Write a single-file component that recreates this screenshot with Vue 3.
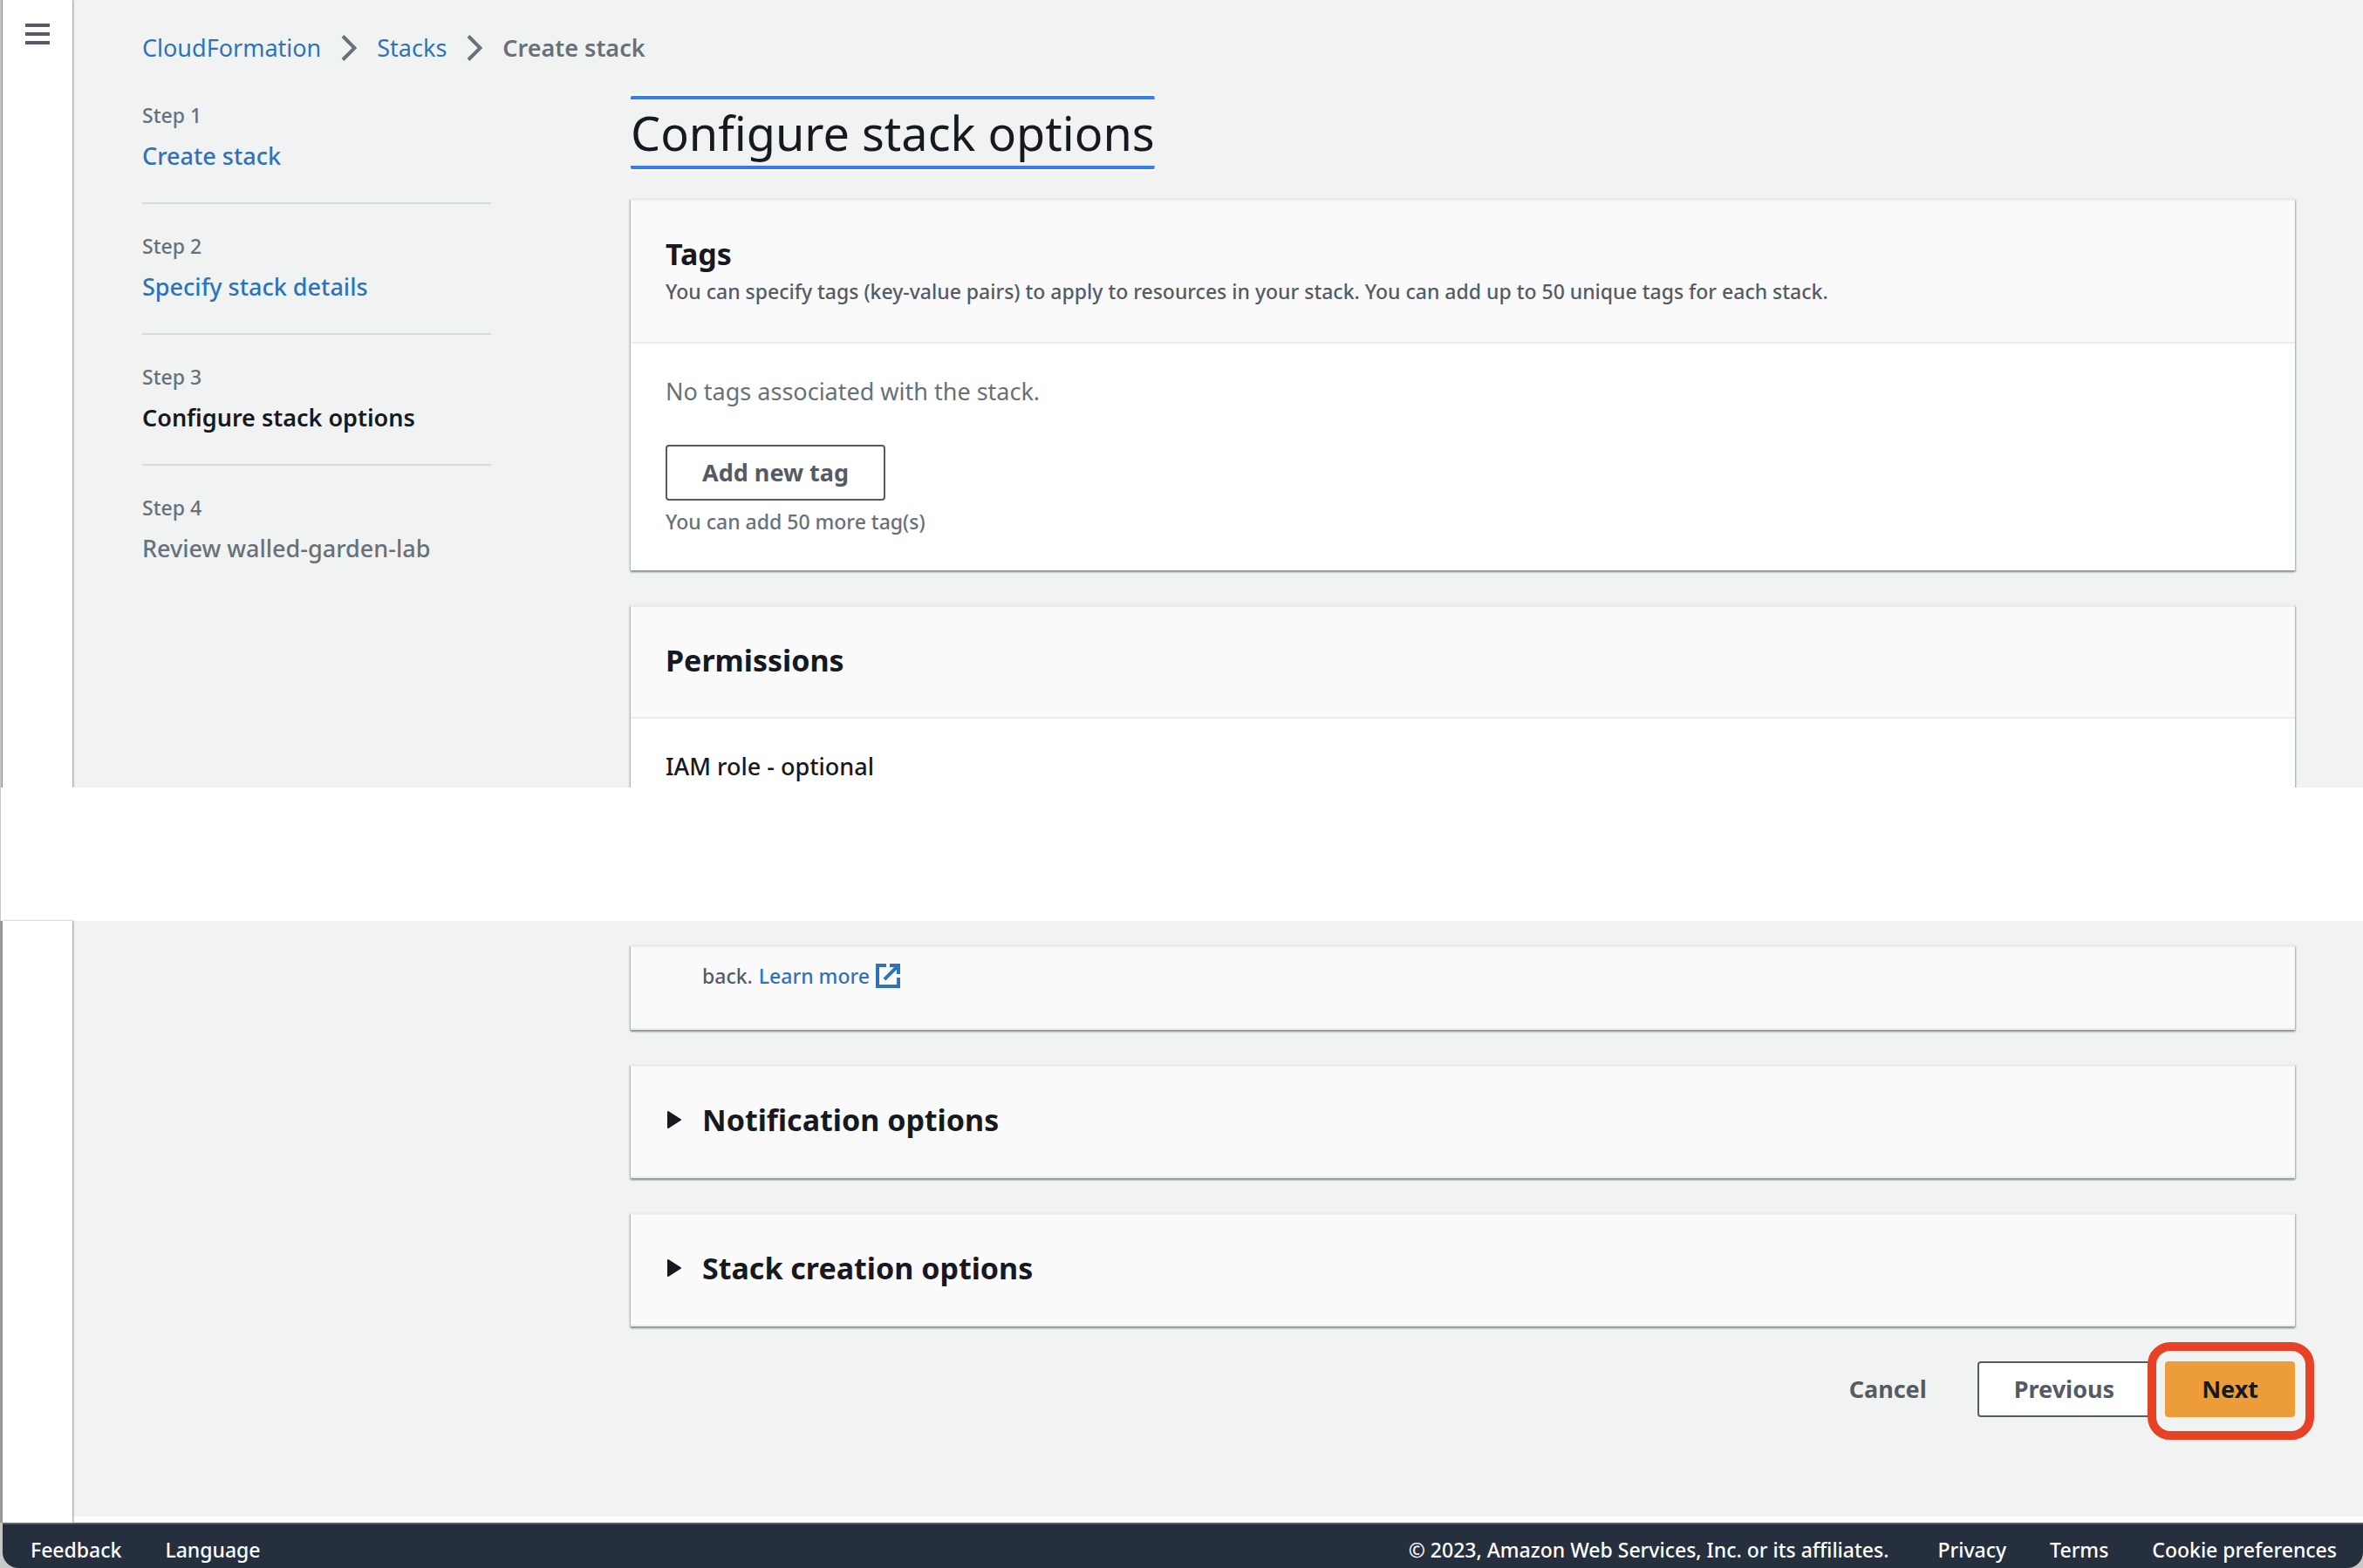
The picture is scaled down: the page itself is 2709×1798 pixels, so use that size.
<script setup>
const steps = [
  { label: 'Step 1', title: 'Create stack', state: 'link' },
  { label: 'Step 2', title: 'Specify stack details', state: 'link' },
  { label: 'Step 3', title: 'Configure stack options', state: 'current' },
  { label: 'Step 4', title: 'Review walled-garden-lab', state: 'pending' },
]
const sections = ['Notification options', 'Stack creation options']
</script>

<template>
  <div class="window">
    <div class="shell top">
      <aside class="rail">
        <button class="menu" type="button" aria-label="Open navigation">
          <svg width="28" height="24" viewBox="0 0 28 24"><path d="M0 2h28M0 12h28M0 22h28" stroke="#545b64" stroke-width="4" /></svg>
        </button>
      </aside>
      <div class="page">
        <nav class="crumbs" aria-label="Breadcrumbs">
          <a href="#">CloudFormation</a>
          <svg width="18" height="30" viewBox="0 0 18 30"><path d="M2 1.500L15.500 15L2 28.500" fill="none" stroke="#687078" stroke-width="4" /></svg>
          <a href="#">Stacks</a>
          <svg width="18" height="30" viewBox="0 0 18 30"><path d="M2 1.500L15.500 15L2 28.500" fill="none" stroke="#687078" stroke-width="4" /></svg>
          <span class="here">Create stack</span>
        </nav>
        <div class="columns">
          <ol class="steps">
            <li v-for="s in steps" :key="s.label">
              <span class="step-label">{{ s.label }}</span>
              <a v-if="s.state === 'link'" class="step-title" href="#">{{ s.title }}</a>
              <span v-else class="step-title" :class="s.state">{{ s.title }}</span>
            </li>
          </ol>
          <main class="content">
            <h1>Configure stack options</h1>
            <section class="card">
              <header class="card-head">
                <h2>Tags</h2>
                <p>You can specify tags (key-value pairs) to apply to resources in your stack. You can add up to 50 unique tags for each stack.</p>
              </header>
              <div class="card-body">
                <p class="empty">No tags associated with the stack.</p>
                <button class="btn" type="button">Add new tag</button>
                <p class="hint">You can add 50 more tag(s)</p>
              </div>
            </section>
            <section class="card">
              <header class="card-head">
                <h2>Permissions</h2>
              </header>
              <div class="card-body">
                <p class="field">IAM role - optional</p>
              </div>
            </section>
          </main>
        </div>
      </div>
    </div>

    <div class="gap"></div>

    <div class="shell bottom">
      <aside class="rail"></aside>
      <div class="page">
        <div class="content lower">
          <section class="card head-only rollback">
            <p>back. <a href="#">Learn more
              <svg width="28" height="28" viewBox="0 0 28 28" fill="none" stroke="#2e73b8" stroke-width="4"><path d="M12 2H2V26H26V16M16 2H26V12M25 3L10 18" /></svg></a></p>
          </section>
          <section v-for="name in sections" :key="name" class="card head-only">
            <h2>
              <button class="toggle" type="button" aria-expanded="false">
                <svg width="16" height="20" viewBox="0 0 16 20"><path d="M1 1L15 10L1 19Z" fill="#16191f" stroke="#16191f" stroke-width="2" stroke-linejoin="round" /></svg>
                {{ name }}
              </button>
            </h2>
          </section>
          <div class="actions">
            <button class="btn plain" type="button">Cancel</button>
            <button class="btn" type="button">Previous</button>
            <span class="callout"><button class="btn primary" type="button">Next</button></span>
          </div>
        </div>
      </div>
    </div>

    <footer class="footer">
      <a href="#">Feedback</a>
      <a href="#">Language</a>
      <span class="copy">© 2023, Amazon Web Services, Inc. or its affiliates.</span>
      <a href="#">Privacy</a>
      <a href="#">Terms</a>
      <a href="#">Cookie preferences</a>
    </footer>
  </div>
</template>

<style>
body {
  margin: 0;
  background: #c8c8c8;
}
</style>

<style scoped>
.window {
  display: flex;
  flex-direction: column;
  min-height: 100vh;
  font-family: "Noto Sans", "Open Sans", sans-serif;
  font-size: 27px;
  font-weight: 500;
  line-height: 44px;
  color: #16191f;
}
h1, h2, p, ol {
  margin: 0;
  padding: 0;
}
a {
  color: #2e73b8;
  text-decoration: none;
}
button {
  font: inherit;
  color: inherit;
  cursor: pointer;
}
svg {
  display: block;
  flex: none;
}
.shell {
  display: flex;
  border-left: 2px solid #c4c4c4;
  background: #f1f3f3;
}
.top {
  height: 903px;
  overflow: hidden;
}
.bottom {
  flex: 1;
  border-left-color: #9c9c9c;
}
.rail {
  position: relative;
  flex: none;
  box-sizing: border-box;
  width: 81px;
  padding: 27px 26px;
  border-left: 1px solid #8c8c8c;
  background: #fff;
  box-shadow: 1px 0 2px #879596;
}
.menu {
  display: block;
  padding: 0;
  border: 0;
  background: none;
}
.page {
  flex: 1;
  min-width: 0;
  padding: 0 78px 0 80px;
}
.bottom .page {
  border-bottom: 7px solid #fff;
}
.crumbs {
  display: flex;
  align-items: center;
  gap: 23px;
  padding-top: 33px;
}
.crumbs a {
  font-weight: 400;
  -webkit-text-stroke: 0;
}
.here {
  font-weight: 600;
  color: #687078;
}
.columns {
  display: flex;
  gap: 160px;
  padding-top: 33px;
}
.steps {
  flex: none;
  box-sizing: border-box;
  width: 400px;
  list-style: none;
}
.steps li {
  display: flex;
  flex-direction: column;
  gap: 3px;
  height: 122px;
  margin-bottom: 26px;
  border-bottom: 2px solid #d5dbdb;
}
.steps li:last-child {
  border: 0;
}
.step-label {
  font-size: 23px;
  color: #687078;
}
.step-title.current {
  font-weight: 600;
}
.step-title.pending {
  color: #687078;
}
.content {
  flex: 1;
  min-width: 0;
  display: flex;
  flex-direction: column;
  gap: 40px;
}
h1 {
  align-self: flex-start;
  margin-bottom: -6px;
  border: solid #357bf2;
  border-width: 4px 0;
  border-radius: 2px;
  box-shadow: 0 0 0 2px #fff;
  font-size: 54px;
  font-weight: 400;
  line-height: 76px;
  clip-path: inset(-4px 0);
}
h2 {
  font-size: 34px;
  font-weight: 700;
}
.card {
  border-top: 2px solid #eaeded;
  background: #fff;
  box-shadow: 0 2px 2px #879596, 1px 1px 2px #b5bdbd, -1px 1px 2px #b5bdbd;
}
.card-head {
  padding: 39px 40px 43px;
  border-bottom: 2px solid #eaeded;
  background: #fafafa;
}
.card-head p {
  padding-top: 6px;
  font-size: 23px;
  line-height: 30px;
  color: #545b64;
}
.card-body {
  padding: 33px 40px 34px;
}
.empty {
  margin-bottom: 39px;
  font-weight: 400;
  color: #687078;
}
.hint {
  padding-top: 2px;
  font-size: 23px;
  color: #687078;
}
.btn {
  box-sizing: border-box;
  height: 64px;
  padding: 0 40px;
  border: 2px solid #545b64;
  border-radius: 4px;
  background: #fff;
  font-weight: 700;
  color: #545b64;
}
.btn.plain {
  border-color: transparent;
  background: none;
}
.btn.primary {
  border-color: #ec9c38;
  background: #ec9c38;
  color: #16191f;
}
.gap {
  height: 153px;
  border: solid #c8c8c8;
  border-width: 0 0 0 1px;
  background: #fff;
}
.lower {
  padding: 28px 0 0 560px;
}
.head-only {
  padding: 39px 40px 43px;
  border-bottom: 2px solid #eaeded;
  background: #fafafa;
}
.rollback {
  padding: 11px 82px 38px;
}
.rollback p, .rollback a {
  display: flex;
  align-items: center;
  gap: 7px;
  font-size: 23px;
  color: #545b64;
}
.rollback a {
  color: #2e73b8;
}
.toggle {
  display: flex;
  align-items: center;
  gap: 24px;
  padding: 0 0 0 2px;
  border: 0;
  background: none;
}
.actions {
  display: flex;
  justify-content: flex-end;
}
.actions .plain {
  margin-right: 16px;
}
.callout {
  display: flex;
  padding: 12px 12px 16px 10px;
  margin: -22px -22px 0 -4px;
  border: 10px solid #e74225;
  border-radius: 26px;
  background: #f1f3f3;
}
.footer {
  display: flex;
  align-items: center;
  gap: 50px;
  box-sizing: border-box;
  height: 52px;
  padding: 7px 30px 0 32px;
  margin-left: 3px;
  border-top: 2px solid #545b64;
  border-radius: 0 0 18px 18px;
  background: #262f3d;
  font-size: 23px;
  line-height: 36px;
  color: #fff;
}
.footer a {
  color: #fff;
}
.copy {
  margin-left: auto;
  margin-right: 6px;
}
</style>
